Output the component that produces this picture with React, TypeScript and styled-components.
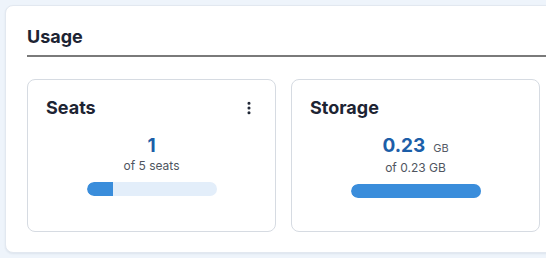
import React from "react";
import styled, { createGlobalStyle } from "styled-components";
import { MoreVertical } from "lucide-react";

const GlobalStyle = createGlobalStyle`
  html, body {
    margin: 0;
    padding: 0;
    background: #eef4fb;
    overflow: hidden;
  }
  body {
    font-family: Inter, "Noto Sans", sans-serif;
    color: #1d2433;
  }
`;

type Usage = {
  key: string;
  title: string;
  value: string;
  unit?: string;
  caption: string;
  percent: number;
  menu?: boolean;
};

const usages: Usage[] = [
  { key: "seats", title: "Seats", value: "1", caption: "of 5 seats", percent: 20, menu: true },
  { key: "storage", title: "Storage", value: "0.23", unit: "GB", caption: "of 0.23 GB", percent: 100 },
];

export default function App() {
  return (
    <>
      <GlobalStyle />
      <Page>
        <Panel>
          <Heading>Usage</Heading>
          <CardGrid>
            {usages.map((u) => (
              <Card key={u.key}>
                <CardHeader>
                  <CardTitle>{u.title}</CardTitle>
                  {u.menu && (
                    <MenuButton aria-label="More">
                      <MoreVertical size={16} strokeWidth={2.6} />
                    </MenuButton>
                  )}
                </CardHeader>
                <Figure>
                  <Value>{u.value}</Value>
                  {u.unit && <Unit>{u.unit}</Unit>}
                </Figure>
                <Caption>{u.caption}</Caption>
                <Track>
                  <Fill style={{ width: `${u.percent}%` }} />
                </Track>
              </Card>
            ))}
          </CardGrid>
        </Panel>
      </Page>
    </>
  );
}

// the panel is wider than the window, so the page clips it at the right edge
const Page = styled.div`
  width: 546px;
  height: 258px;
  overflow: hidden;
  box-sizing: border-box;
  padding: 5px 0 0 5px;
`;

const Panel = styled.section`
  box-sizing: border-box;
  width: 600px;
  height: 248px;
  background: #ffffff;
  border: 1px solid #e2e8f0;
  border-radius: 8px;
  box-shadow: 0 1px 2px rgba(30, 50, 80, 0.08);
  padding: 19px 22px 0 21px;
`;

const Heading = styled.h2`
  margin: 0;
  font-size: 18px;
  line-height: 24px;
  font-weight: 700;
  color: #1d2433;
  padding-bottom: 6px;
  border-bottom: 2px solid #7a7a7a;
`;

const CardGrid = styled.div`
  display: grid;
  grid-template-columns: 249px 249px;
  gap: 15px;
  margin-top: 22px;
`;

const Card = styled.div`
  box-sizing: border-box;
  height: 153px;
  border: 1px solid #d6dbe2;
  border-radius: 8px;
  padding: 16px 18px 0 18px;
  display: flex;
  flex-direction: column;
  align-items: center;
`;

const CardHeader = styled.div`
  align-self: stretch;
  display: flex;
  align-items: center;
  justify-content: space-between;
  height: 24px;
`;

const CardTitle = styled.h3`
  margin: 0;
  font-size: 18px;
  line-height: 24px;
  font-weight: 700;
  color: #1d2433;
`;

const MenuButton = styled.button`
  border: none;
  background: none;
  padding: 0;
  color: #1d2433;
  display: flex;
  align-items: center;
`;

const Figure = styled.div`
  margin-top: 14px;
  display: flex;
  align-items: baseline;
  line-height: 24px;
`;

const Value = styled.span`
  font-size: 19px;
  font-weight: 700;
  color: #1c5ea8;
`;

const Unit = styled.span`
  font-size: 11px;
  color: #555b66;
  margin-left: 8px;
`;

const Caption = styled.div`
  font-size: 12px;
  line-height: 16px;
  color: #4f5560;
`;

const Track = styled.div`
  margin-top: 8px;
  width: 130px;
  height: 14px;
  border-radius: 7px;
  background: #e3eefa;
  overflow: hidden;
`;

const Fill = styled.div`
  height: 100%;
  background: #3a8ddb;
  border-radius: 7px 0 0 7px;
`;
